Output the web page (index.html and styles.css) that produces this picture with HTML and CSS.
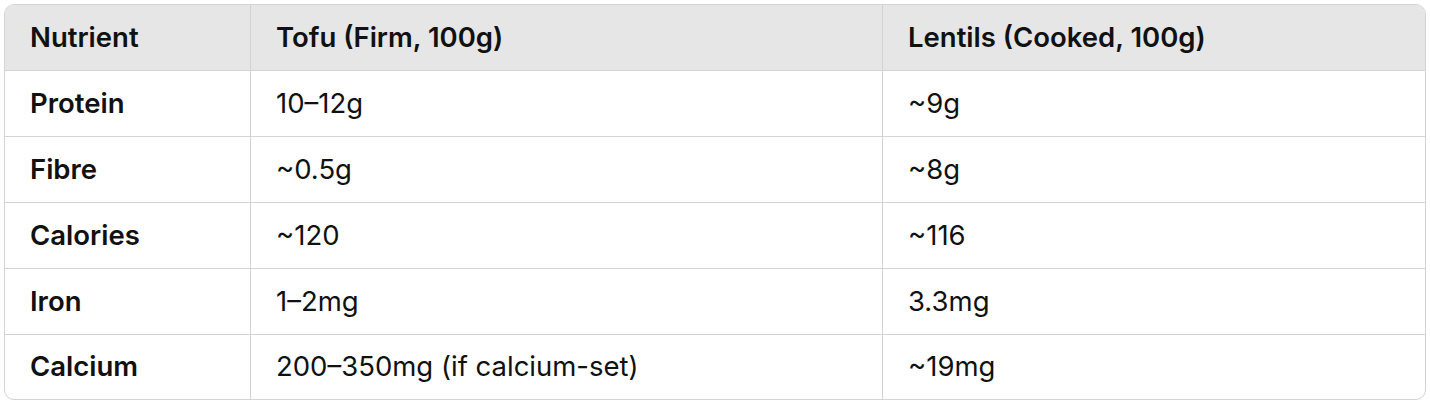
FILE: index.html
```html
<!DOCTYPE html>
<html>
<head>
<meta charset="utf-8">
<link rel="stylesheet" href="styles.css">
</head>
<body>
<div class="wrap">
  <table class="tbl">
    <colgroup>
      <col class="c1">
      <col class="c2">
      <col class="c3">
    </colgroup>
    <thead>
      <tr><th>Nutrient</th><th>Tofu (Firm, 100g)</th><th>Lentils (Cooked, 100g)</th></tr>
    </thead>
    <tbody>
      <tr><td class="name">Protein</td><td>10–12g</td><td>~9g</td></tr>
      <tr><td class="name">Fibre</td><td>~0.5g</td><td>~8g</td></tr>
      <tr><td class="name">Calories</td><td>~120</td><td>~116</td></tr>
      <tr><td class="name">Iron</td><td>1–2mg</td><td>3.3mg</td></tr>
      <tr><td class="name">Calcium</td><td>200–350mg (if calcium-set)</td><td>~19mg</td></tr>
    </tbody>
  </table>
</div>
</body>
</html>
```
FILE: styles.css
```css
html, body {
  margin: 0;
  padding: 0;
  background: #ffffff;
}
body {
  padding: 4px;
  font-family: Inter, "Noto Sans", "Liberation Sans", sans-serif;
  color: #111111;
}
.wrap {
  width: 1420px;
  border: 1px solid #d3d3d3;
  border-radius: 10px;
  overflow: hidden;
}
.tbl {
  width: 100%;
  border-collapse: separate;
  border-spacing: 0;
  table-layout: fixed;
}
.c1 { width: 246px; }
.c2 { width: 632px; }
.c3 { width: auto; }
th, td {
  padding: 0 0 0 25px;
  text-align: left;
  vertical-align: middle;
  font-size: 27.5px;
  line-height: 1;
  border-bottom: 1px solid #d3d3d3;
  box-sizing: border-box;
  white-space: nowrap;
}
th {
  height: 66px;
  background: #e6e6e6;
  font-weight: 600;
}
td {
  height: 66px;
  font-weight: 400;
}
th:not(:last-child), td:not(:last-child) {
  border-right: 1px solid #d3d3d3;
}
tbody tr:last-child td {
  border-bottom: none;
  height: 64px;
}
td.name {
  font-weight: 600;
}
```
